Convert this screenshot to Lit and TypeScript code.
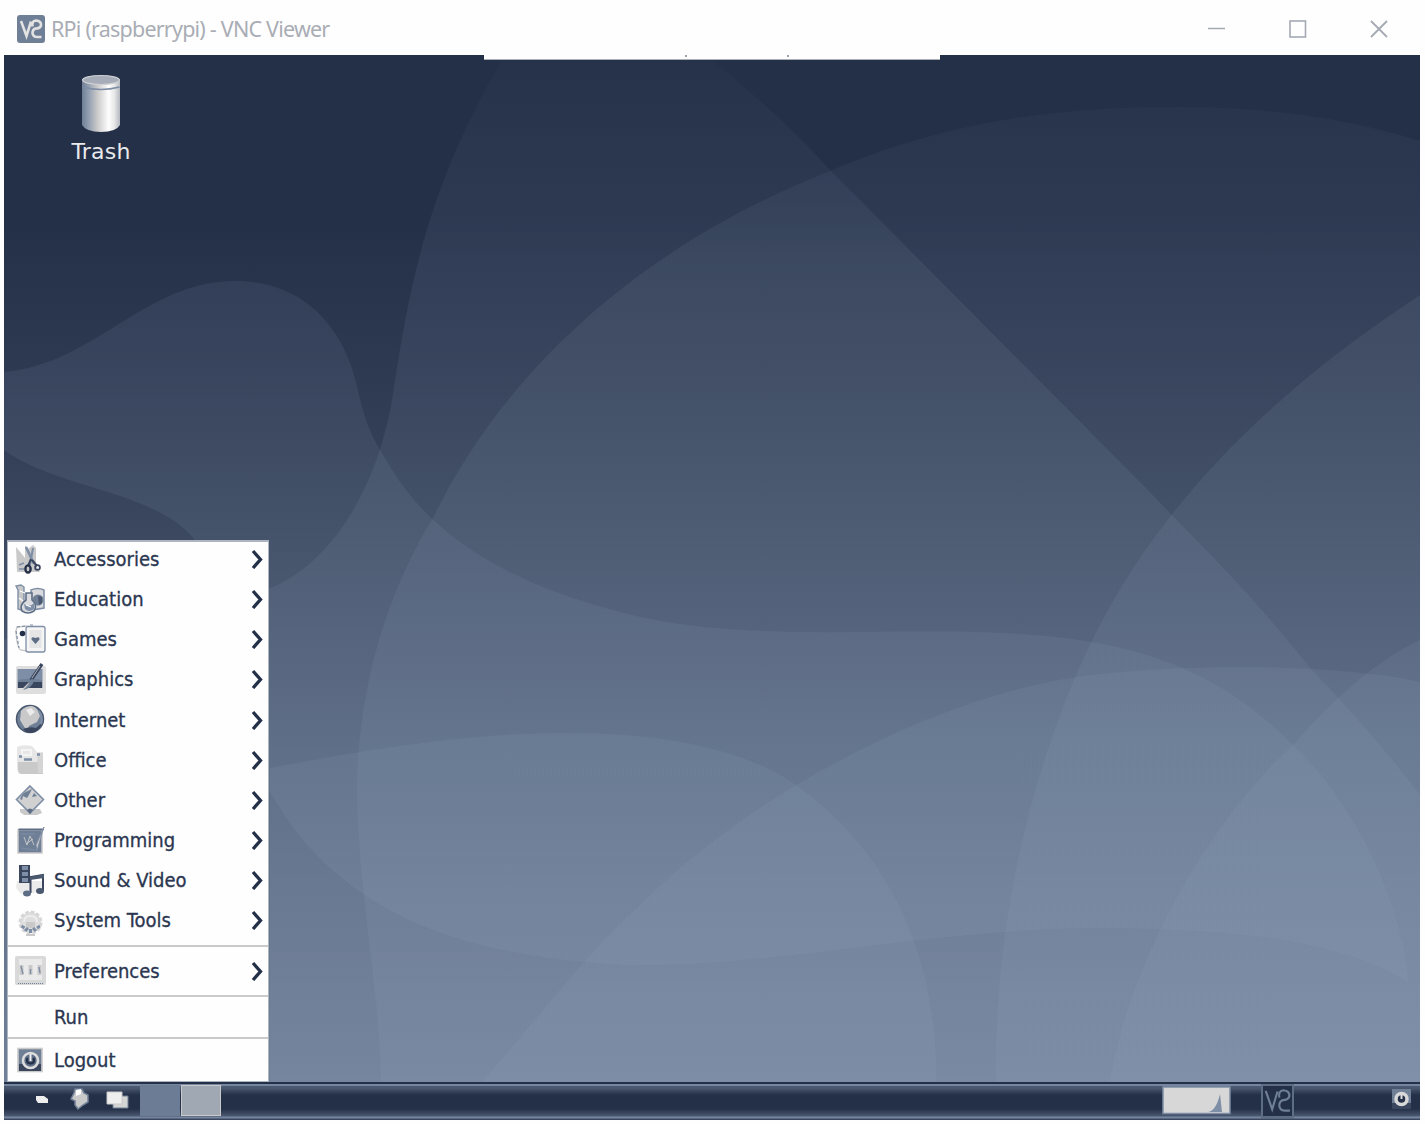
import { LitElement, html, svg, css } from "lit";
import { customElement, property } from "lit/decorators.js";

const N = "#242f48", D = "#3a455e", S = "#4a5970", M = "#5e6d86", B = "#6f7f96", L = "#7e8ea6", G = "#c9c9c9", W = "#fefefe";

const ICONS: Record<string, unknown> = {
  accessories: svg`<path d="M1 3L6 9L10 14V1L13 5L18 1L21 4V21L25 28H2Z" fill="${G}"/>
    <path d="M4 21l5-2M4 25h5" stroke="${L}" stroke-width="1.5"/>
    <path d="M11 3L19 20" stroke="${L}" stroke-width="2.6"/><path d="M18 4L15 21" stroke="${L}" stroke-width="2"/>
    <path d="M16 15l-3 7M17 16l5 6" stroke="${D}" stroke-width="2"/>
    <ellipse cx="13" cy="25" rx="2.6" ry="3.6" fill="none" stroke="${N}" stroke-width="2.4"/>
    <circle cx="22.5" cy="23.5" r="2.4" fill="none" stroke="${D}" stroke-width="1.8"/>`,
  education: svg`<path d="M1 2l2 4V25l6 2V3L6 1z" fill="${G}" stroke="${L}" stroke-width="1.4"/>
    <path d="M16 6Q23 3 29 6V24L17 26Z" fill="#d9dadd" stroke="${L}" stroke-width="1.5"/>
    <circle cx="23" cy="16" r="5.5" fill="${B}"/><path d="M23 12l4 1v6l-3 2z" fill="${S}"/>
    <path d="M11 9h6v7q6 5 2 11q-6 4-12 0q-3-6 4-11z" fill="#dadcdf" stroke="${M}" stroke-width="1.6"/>
    <path d="M9 20q6 4 10-1v6q-5 4-9 0z" fill="${L}"/><path d="M11 21l5 2M5 7l5 2M4 14l4 3" stroke="${W}" stroke-width="1.3"/>`,
  games: svg`<path d="M2 3L12 2V27L6 26Q2 25 1 7Z" fill="${W}" stroke="${G}" stroke-width="1.4"/>
    <path d="M2 3L12 2M15 1h4M1 7l3 17" stroke="${L}" stroke-width="1.2" stroke-dasharray="3 2"/>
    <rect x="11" y="2.5" width="19" height="25.5" rx="2" fill="#f5f5f5" stroke="${L}" stroke-width="1.3"/>
    <rect x="14.500" y="6" width="12" height="18" fill="#e5e5e6"/>
    <circle cx="7.500" cy="9.500" r="2.8" fill="${N}"/>
    <path d="M20.500 20L16.500 15.500Q16 12 20.500 14Q25 12 24.500 15.500Z" fill="${M}"/>`,
  graphics: svg`<rect x="1" y="2" width="30" height="28" rx="2" fill="#dedede"/>
    <rect x="2.500" y="5" width="25" height="19" fill="${L}"/><path d="M3 16h24v8H3z" fill="${D}"/>
    <path d="M3 16q12-3 24 0v2H3z" fill="${B}"/><path d="M15 19l-6 6" stroke="${G}" stroke-width="2.500"/>
    <path d="M27 0L16 16" stroke="${D}" stroke-width="3.4"/><path d="M25 2L17 14" stroke="${G}" stroke-width=".8"/>
    <path d="M17 14l2 3q-2 7-11 9q5-4 9-12" fill="${B}"/>`,
  internet: svg`<circle cx="15" cy="15" r="13.500" fill="${B}" stroke="${S}" stroke-width="1.5"/>
    <path d="M6 7q4-5 11-5q4 1 6 5l2 5-3 6-8 4-2 5-4-6-3-5z" fill="${G}"/>
    <path d="M11 6l5-2 4 4-5 4z" fill="#ececec"/><path d="M8 25q7-3 13-1l6-5q-4 11-13 9.500-3 0-6-3.500z" fill="${D}"/>
    <path d="M24 7q4 6 2 13" stroke="${L}" fill="none" stroke-width="2"/>`,
  office: svg`<path d="M2 3Q8 0 17 2L22 8H28V30H5Q2 29 2 22Z" fill="#e6e6e6"/>
    <path d="M3 18H28V30H6q-3-1-3-5z" fill="${G}"/><path d="M22 9h6v20h-5z" fill="#d4d4d4"/><path d="M7 6h9v5H7z" fill="none" stroke="#f4f4f4" stroke-width="2"/>
    <path d="M9 15.500h8M4 12.500l3 0M22 10.500h3" stroke="${L}" stroke-width="2.3"/>`,
  other: svg`<path d="M5 25h20l2 4-5 2H9l-4-3z" fill="${G}"/>
    <path d="M15 2L28.500 15.500L15 29L1.500 15.500Z" fill="#d1d1d2" stroke="${L}" stroke-width="1.6"/>
    <path d="M5 15q3-7 8-8l4-2q-4 8-5 9l-4-2-1 4zM19 9l3 3-5 1z" fill="${B}"/>
    <path d="M12 26q3-3 6 0l-3 4z" fill="${M}"/>`,
  programming: svg`<rect x="3" y="5" width="24" height="23" fill="${B}" stroke="${G}" stroke-width="1.5"/>
    <path d="M3.500 4.500h25" stroke="${M}" stroke-width="2"/><path d="M6 9h14M6 23l14 2" stroke="${L}"/>
    <path d="M29 2L21 20l1 6 5-18z" fill="${G}" stroke="${L}" stroke-width="1"/>
    <path d="M9 12l3 8 3-9 4 9M11 19l7-5" stroke="${G}" fill="none" stroke-width=".9"/>`,
  sound: svg`<path d="M2 16h26l1 6-10 6-13 1-5-6z" fill="#ebebec"/>
    <path d="M4 0H15V18H4Z" fill="${D}"/><path d="M7 1h6v4H7zM7 7h6v4H7zM7 13h6v4H7z" fill="${L}"/>
    <path d="M15.500 28V12L28 10V26" fill="none" stroke="${D}" stroke-width="2"/><path d="M15 12L29 9v4l-14 2z" fill="${S}"/>
    <ellipse cx="12" cy="28.500" rx="4" ry="3" fill="${M}"/><ellipse cx="25" cy="26" rx="4" ry="3" fill="${S}"/>`,
  system: svg`<circle cx="15.500" cy="17.500" r="10.500" fill="#dedede" stroke="#d6d6d6" stroke-width="3" stroke-dasharray="3.500 2"/>
    <path d="M9 17q0-6 6.500-6t6.500 6" stroke="#f0f0f0" stroke-width="1.500"/><path d="M11 17h9v6h-9z" fill="${G}"/>
    <path d="M6.500 21l3 2M10 26l3-3M15.500 28v-4M21 26l-3-3M25 21l-3 2" stroke="${L}" stroke-width="3"/><path d="M11 30h9" stroke="${G}" stroke-width="2"/>`,
  preferences: svg`<rect x="0" y="1" width="31" height="29" rx="2" fill="#d9d9d9"/><rect x="4" y="4" width="23" height="21" fill="#eaeaea"/>
    <path d="M6.500 10v10M15.500 10v10M24.500 10v10" stroke="${G}" stroke-width="4"/>
    <path d="M6 11l2 8M15.500 14v5M24 12l1 6" stroke="${L}" stroke-width="1.4"/><path d="M3 28.500h25" stroke="${B}" stroke-dasharray="1 1"/>`,
  logout: svg`<rect x="3" y="3.500" width="24" height="23" fill="${B}" stroke="${G}" stroke-width="1.600"/>
    <path d="M4 19h22v7H4z" fill="${D}"/><circle cx="15.500" cy="15.500" r="7.500" fill="${M}" stroke="#dddddd" stroke-width="2.600"/>
    <path d="M15.500 9v7" stroke="#eee" stroke-width="2"/><path d="M12.500 13q-2 5 3 5.500q5-.5 3-5.500" stroke="${N}" fill="none" stroke-width="2.200"/>`,
};

const vncMark = svg`<path d="M4 6L9.500 21L14 6.500"/><path d="M15.500 11.500Q14.500 6 19 5.500Q24.500 6 24 10.500Q23 13.500 18.500 13.500Q15.500 14.500 15.500 18Q16 22 20 22H24.500"/>`;

@customElement("menu-icon")
class MenuIcon extends LitElement {
  @property() name = "";
  static styles = css`:host{display:block;width:31px;height:31px}svg{display:block;overflow:visible}`;
  render() {
    return html`<svg width="31" height="31" viewBox="0 0 31 31" fill="none">${ICONS[this.name]}</svg>`;
  }
}

@customElement("title-bar")
class TitleBar extends LitElement {
  static styles = css`
    :host{display:flex;align-items:center;height:55px;box-sizing:border-box;padding:3px 0 0 17px;background:#fefefe}
    .logo{display:block;width:28px;height:28px}
    .title{font:21.5px/30px "Noto Sans","Open Sans",sans-serif;color:#a9adb5;margin-left:6px;flex:1;white-space:nowrap;letter-spacing:-.78px}
    .controls{display:flex;gap:63px;margin-right:37px}
    .controls svg{display:block}
  `;
  render() {
    return html`
      <svg class="logo" viewBox="0 0 28 28"><rect width="28" height="28" rx="3" fill=${B}/>
        <g fill="none" stroke="#e2e2e3" stroke-width="2.600">${vncMark}</g></svg>
      <div class="title">RPi (raspberrypi) - VNC Viewer</div>
      <div class="controls">
        <svg width="18" height="18" fill="none" stroke="#a4a9b3" stroke-width="1.500"><path d="M0 8.500H17"/></svg>
        <svg width="18" height="18" fill="none" stroke="#a4a9b3" stroke-width="1.600"><rect x="1" y="1" width="15.500" height="16"/></svg>
        <svg width="18" height="18" fill="none" stroke="#a4a9b3" stroke-width="1.800"><path d="M1 1L17 17M17 1L1 17"/></svg>
      </div>`;
  }
}

@customElement("desk-wallpaper")
class DeskWallpaper extends LitElement {
  static styles = css`:host{display:block}svg{display:block}`;
  render() {
    return html`<svg width="1416" height="1027" viewBox="4 55 1416 1027">
      <defs>
        <linearGradient id="sky" gradientUnits="userSpaceOnUse" x1="0" y1="55" x2="0" y2="1082">
          <stop offset="0" stop-color="#242f48"/><stop offset=".16" stop-color="#242f48"/>
          <stop offset=".31" stop-color="#2e3952"/><stop offset=".47" stop-color="#3b4860"/>
          <stop offset=".67" stop-color="#4f5e76"/><stop offset="1" stop-color="#6b7b93"/>
        </linearGradient>
        <linearGradient id="veil" gradientUnits="userSpaceOnUse" x1="0" y1="55" x2="0" y2="1082">
          <stop offset="0" stop-color="#8c9fb6" stop-opacity=".02"/><stop offset=".08" stop-color="#8c9fb6" stop-opacity=".06"/>
          <stop offset=".2" stop-color="#8c9fb6" stop-opacity=".11"/><stop offset=".6" stop-color="#8c9fb8" stop-opacity=".13"/>
          <stop offset="1" stop-color="#8d9db5" stop-opacity=".17"/>
        </linearGradient>
      </defs>
      <rect x="4" y="55" width="1416" height="1027" fill="url(#sky)"/>
      <g fill="url(#veil)">
        <path d="M4 372C95 364 145 281 235 281C315 281 347 343 356 382C364 420 372 438 385 458C425 530 500 586 650 619C765 642 905 626 1020 634C1150 642 1225 677 1293 745C1362 810 1404 915 1408 982C1340 940 1240 928 1090 928C930 929 780 966 630 965C430 956 330 895 272 795C235 730 225 590 195 540C155 490 60 490 4 450Z"/>
        <path d="M505 55C425 190 410 290 395 380C380 500 320 570 270 588C180 625 90 590 4 640V1082H1420V795Q1370 730 1310 668C1240 580 1190 535 1140 482L830 170Q770 105 705 55Z"/>
        <path d="M381 1082C380 980 352 860 358 760C365 660 395 580 433 518C500 380 630 250 830 171C950 120 1060 107 1180 107Q1310 107 1420 141V1082Z"/>
        <path d="M996 1082C993 900 1045 730 1100 625C1160 510 1260 400 1420 295V1082Z"/>
        <path d="M482 1082C545 1010 590 950 640 905C740 805 900 715 1040 684C1120 664 1320 660 1420 682V1082Z"/>
        <path d="M270 768C390 745 480 733 570 733C665 733 745 751 790 781C890 848 938 960 936 1082H270Z"/>
        <path d="M1110 1082C1130 960 1210 820 1293 745Q1360 668 1420 640V1082Z"/>
      </g>
    </svg>`;
  }
}

interface Entry { icon?: string; label: string; sub?: boolean }

@customElement("start-menu")
class StartMenu extends LitElement {
  static styles = css`
    :host{display:block;box-sizing:border-box;width:262px;height:542px;border:solid #aeb4c0;border-width:2px 1px 1px 1px;background:#fefefe;
      font:20px/28px "DejaVu Sans Condensed","DejaVu Sans",sans-serif;font-stretch:condensed;color:#2b3750}
    .row{display:grid;grid-template-columns:31px 1fr 14px;column-gap:8px;align-items:center;height:40.15px;padding:0 4px 0 7px}
    .apps{height:406px;margin-top:-3px}
    .prefs,.run,.exit{border-top:2px solid #cacaca;display:grid;align-items:center}
    .prefs{height:48px}.run{height:39.500px}.exit{height:44px}
    .label{grid-column:2;white-space:nowrap;-webkit-text-stroke:.3px #2b3750}
    .arrow{display:block}
  `;
  row(e: Entry) {
    return html`<div class="row">
      ${e.icon ? html`<menu-icon name=${e.icon}></menu-icon>` : ""}
      <span class="label">${e.label}</span>
      ${e.sub ? html`<svg class="arrow" width="14" height="20" fill="none" stroke="${N}" stroke-width="3.300"><path d="M3 2L10.500 10.500L3 19"/></svg>` : ""}
    </div>`;
  }
  render() {
    const apps: Entry[] = [
      { icon: "accessories", label: "Accessories" }, { icon: "education", label: "Education" },
      { icon: "games", label: "Games" }, { icon: "graphics", label: "Graphics" },
      { icon: "internet", label: "Internet" }, { icon: "office", label: "Office" },
      { icon: "other", label: "Other" }, { icon: "programming", label: "Programming" },
      { icon: "sound", label: "Sound & Video" }, { icon: "system", label: "System Tools" },
    ];
    return html`
      <div class="apps">${apps.map((a) => this.row({ ...a, sub: true }))}</div>
      <div class="prefs">${this.row({ icon: "preferences", label: "Preferences", sub: true })}</div>
      <div class="run">${this.row({ label: "Run" })}</div>
      <div class="exit">${this.row({ icon: "logout", label: "Logout" })}</div>`;
  }
}

@customElement("task-bar")
class TaskBar extends LitElement {
  static styles = css`
    :host{display:flex;justify-content:space-between;height:38px;box-sizing:border-box;padding-top:2px;
      background:linear-gradient(#242f48 0 2px,#7786a0 2px 4px,#4a5970 4px 6px,#3a455e 9px,#242f48 13px 27px,#3a455e 31px,#4a5970 34px,#7786a0 35px 36px,#3a455e 37px)}
    svg{display:block}
    .left,.right{display:flex}
    .left{padding-left:32px}
    .launch{padding-top:4px}
    .task{width:40px;height:31px;margin-top:1px;background:#6c7c94}
    .task.active{box-sizing:border-box;margin-left:1px;background:#a0a8b4;border:1px solid #c9c9c9}
    .cpu{margin:2px 30px 0 0}
    .power{margin:5px 8px 0 98px}
  `;
  render() {
    return html`
      <div class="left">
        <svg class="launch" width="104" height="26" fill="none">
          <path d="M0 8h8l4 3v4H2L0 12z" fill="#eee"/>
          <path d="M39 1h7l2 4 4 2v7l-5 3-5 4-3-4v-4l-4-2 3-6z" fill="${G}" stroke="${B}" stroke-width="1.500"/><path d="M40 2l5-1v5l-5 2z" fill="${W}"/>
          <path d="M77 8h15v12H77z" fill="#d4d4d4" stroke="${B}"/><path d="M71 4h15v12H71z" fill="#eee" stroke="${G}"/>
        </svg>
        <div class="task"></div><div class="task active"></div>
      </div>
      <div class="right">
        <svg class="cpu" width="69" height="29"><rect x="1" y="1" width="67" height="26.500" fill="#d7d7d7" stroke="${L}" stroke-width="1.500"/>
          <path d="M46 26Q54 25 58 8L60 26Z" fill="${L}"/></svg>
        <svg width="33" height="34" fill="none"><rect x="1" y="1" width="31" height="32" fill="${N}" stroke="${M}" stroke-width="2"/>
          <g stroke="${B}" stroke-width="1.800" transform="translate(0 -.5) scale(1.180 1.230)">${vncMark}</g></svg>
        <svg class="power" width="20" height="22"><rect x="0" y="0" width="19" height="19" fill="${B}"/><path d="M0 14h19v6H0z" fill="${D}"/>
          <circle cx="9.500" cy="10" r="5.500" fill="${N}" stroke="#d8d8d8" stroke-width="3.500"/><path d="M9.500 6v4" stroke="#ddd" stroke-width="2"/></svg>
      </div>`;
  }
}

@customElement("app-root")
class AppRoot extends LitElement {
  static styles = css`
    :host{display:block;width:1425px;height:1124px;background:#fefefe;overflow:hidden}
    .screen{margin:0 5px 0 4px}
    .desktop{position:relative;height:1027px}
    .handle{position:absolute;left:480px;top:0;width:456px;height:5px;box-sizing:border-box;background:#fefefe;border-bottom:1px solid #a9b1b5}
    .tick{position:absolute;top:0;width:2px;height:2px;background:#9ba3b1}
    .tick.a{left:201px}.tick.b{left:303px}
    .trash{position:absolute;left:47px;top:19px;width:100px;display:grid;justify-items:center;row-gap:5px}
    .trash span{font:22px/28px "DejaVu Sans",sans-serif;color:#e9eaec;letter-spacing:.2px}
    .trash svg{display:block}
    start-menu{position:absolute;left:3px;top:485px}
  `;
  render() {
    return html`
      <title-bar></title-bar>
      <div class="screen">
        <div class="desktop">
          <desk-wallpaper></desk-wallpaper>
          <div class="handle"><i class="tick a"></i><i class="tick b"></i></div>
          <div class="trash">
            <svg width="40" height="59"><defs><linearGradient id="can"><stop offset="0" stop-color="${B}"/><stop offset=".2" stop-color="#98a3b4"/><stop offset=".4" stop-color="#c9c9c9"/><stop offset=".7" stop-color="#fefefe"/><stop offset=".85" stop-color="#e8e8e8"/><stop offset="1" stop-color="#b4b8c0"/></linearGradient></defs>
              <path d="M1 7V51Q5 58 20 58Q35 58 39 51V7Z" fill="url(#can)"/>
              <path d="M1 7V13Q20 19 39 13V7Z" fill="url(#can)"/>
              <path d="M1.500 13Q20 18 38.500 13" fill="none" stroke="${L}" stroke-width="1.500"/>
              <ellipse cx="20" cy="6" rx="18.500" ry="4.500" fill="#a6adb9" stroke="#d0d1d3" stroke-width="1.200"/></svg>
            <span>Trash</span>
          </div>
          <start-menu></start-menu>
        </div>
        <task-bar></task-bar>
      </div>`;
  }
}
